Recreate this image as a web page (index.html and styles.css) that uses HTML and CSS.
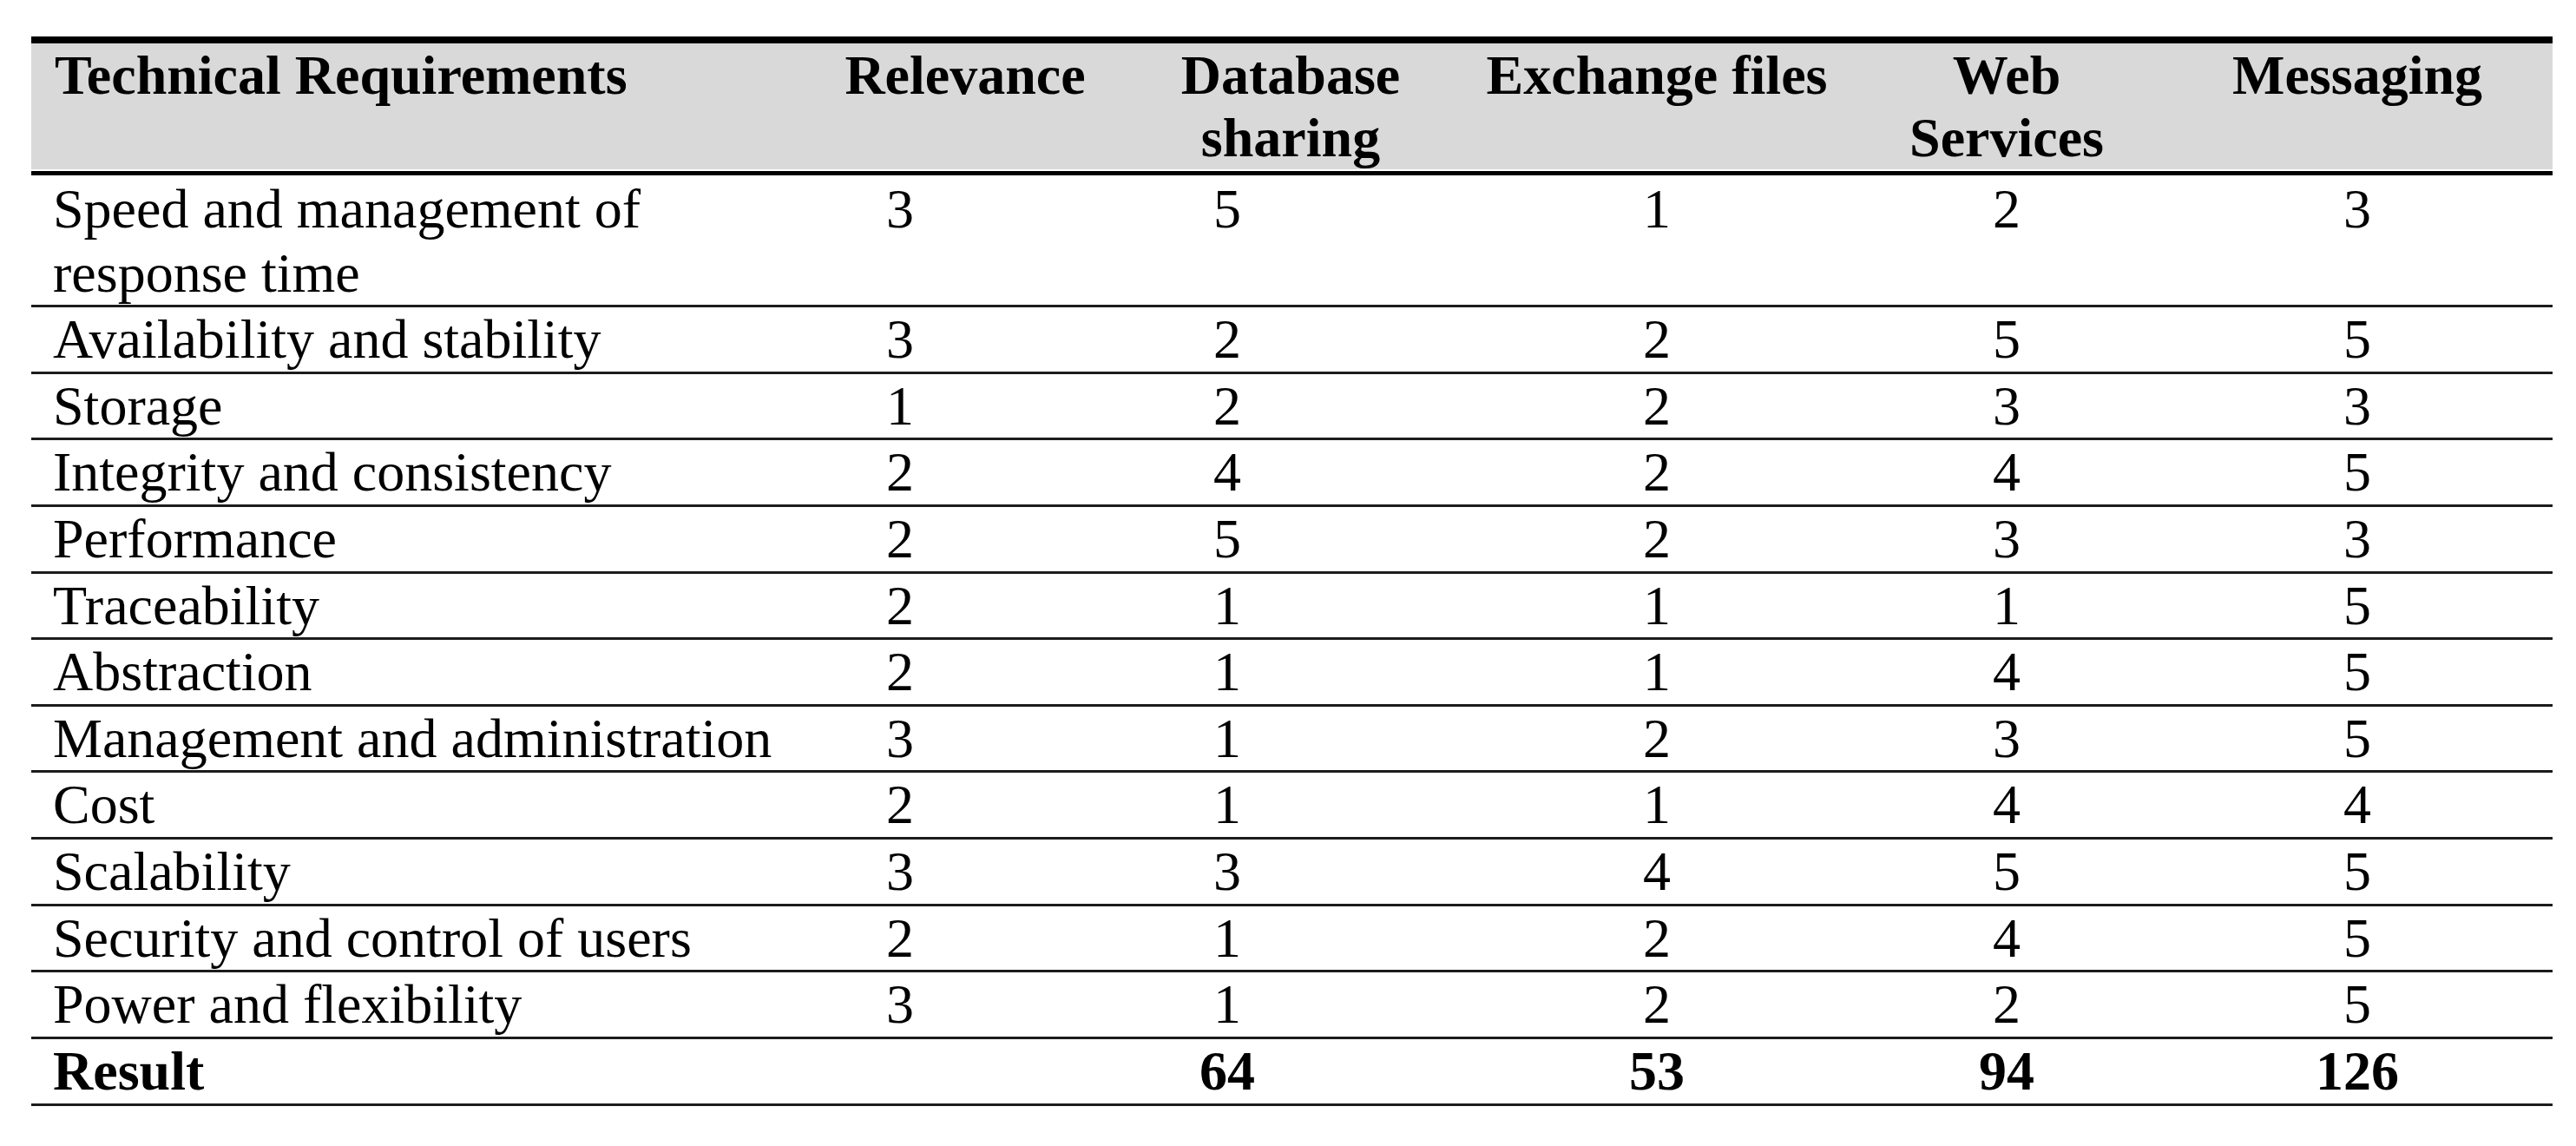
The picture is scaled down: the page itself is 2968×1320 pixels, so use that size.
FILE: index.html
```html
<!DOCTYPE html>
<html lang="en">
<head>
<meta charset="utf-8">
<title>Technical Requirements</title>
<link rel="stylesheet" href="styles.css">
</head>
<body>
<table class="matrix">
  <colgroup>
    <col class="c-req">
    <col class="c-rel">
    <col class="c-db">
    <col class="c-ex">
    <col class="c-ws">
    <col class="c-msg">
  </colgroup>
  <thead>
    <tr>
      <th class="label">Technical Requirements</th>
      <th>Relevance</th>
      <th>Database sharing</th>
      <th>Exchange files</th>
      <th>Web Services</th>
      <th>Messaging</th>
    </tr>
  </thead>
  <tbody>
    <tr class="first"><td class="label">Speed and management of response time</td><td class="rel">3</td><td class="db">5</td><td>1</td><td>2</td><td>3</td></tr>
    <tr><td class="label">Availability and stability</td><td class="rel">3</td><td class="db">2</td><td>2</td><td>5</td><td>5</td></tr>
    <tr><td class="label">Storage</td><td class="rel">1</td><td class="db">2</td><td>2</td><td>3</td><td>3</td></tr>
    <tr><td class="label">Integrity and consistency</td><td class="rel">2</td><td class="db">4</td><td>2</td><td>4</td><td>5</td></tr>
    <tr><td class="label">Performance</td><td class="rel">2</td><td class="db">5</td><td>2</td><td>3</td><td>3</td></tr>
    <tr><td class="label">Traceability</td><td class="rel">2</td><td class="db">1</td><td>1</td><td>1</td><td>5</td></tr>
    <tr><td class="label">Abstraction</td><td class="rel">2</td><td class="db">1</td><td>1</td><td>4</td><td>5</td></tr>
    <tr><td class="label">Management and administration</td><td class="rel">3</td><td class="db">1</td><td>2</td><td>3</td><td>5</td></tr>
    <tr><td class="label">Cost</td><td class="rel">2</td><td class="db">1</td><td>1</td><td>4</td><td>4</td></tr>
    <tr><td class="label">Scalability</td><td class="rel">3</td><td class="db">3</td><td>4</td><td>5</td><td>5</td></tr>
    <tr><td class="label">Security and control of users</td><td class="rel">2</td><td class="db">1</td><td>2</td><td>4</td><td>5</td></tr>
    <tr><td class="label">Power and flexibility</td><td class="rel">3</td><td class="db">1</td><td>2</td><td>2</td><td>5</td></tr>
    <tr class="total"><td class="label">Result</td><td class="rel"></td><td class="db">64</td><td>53</td><td>94</td><td>126</td></tr>
  </tbody>
</table>
</body>
</html>
```
FILE: styles.css
```css
html, body {
  margin: 0;
  padding: 0;
  background: #ffffff;
}

.matrix {
  border-collapse: separate;
  border-spacing: 0;
  table-layout: fixed;
  width: 2905px;
  margin: 42px 0 0 36px;
  font-family: "Liberation Serif", "Times New Roman", serif;
  font-size: 64px;
  line-height: 73.6px;
  color: #000000;
}

.c-req { width: 899px; }
.c-rel { width: 354px; }
.c-db  { width: 396px; }
.c-ex  { width: 448px; }
.c-ws  { width: 358px; }
.c-msg { width: 450px; }

.matrix th {
  background: #d9d9d9;
  font-weight: bold;
  text-align: center;
  vertical-align: top;
  line-height: 72px;
  padding: 1px 10px 0;
  border-top: 8px solid #000000;
  border-bottom: 2px solid #ffffff;
}

.matrix th.label {
  text-align: left;
  padding-left: 27px;
}

.matrix td {
  text-align: center;
  vertical-align: top;
  padding: 0 10px;
  border-bottom: 3px solid #1c1c1c;
  white-space: nowrap;
}

.matrix td.label {
  text-align: left;
  padding-left: 25px;
  white-space: normal;
}

.matrix td.rel {
  padding-left: 25px;
  padding-right: 175px;
}

.matrix td.db {
  padding-left: 25px;
  padding-right: 171px;
}

.matrix tr.first td {
  border-top: 5px solid #000000;
  padding-top: 2px;
}

.matrix tr.total td {
  font-weight: bold;
  padding-bottom: 1px;
}
```
